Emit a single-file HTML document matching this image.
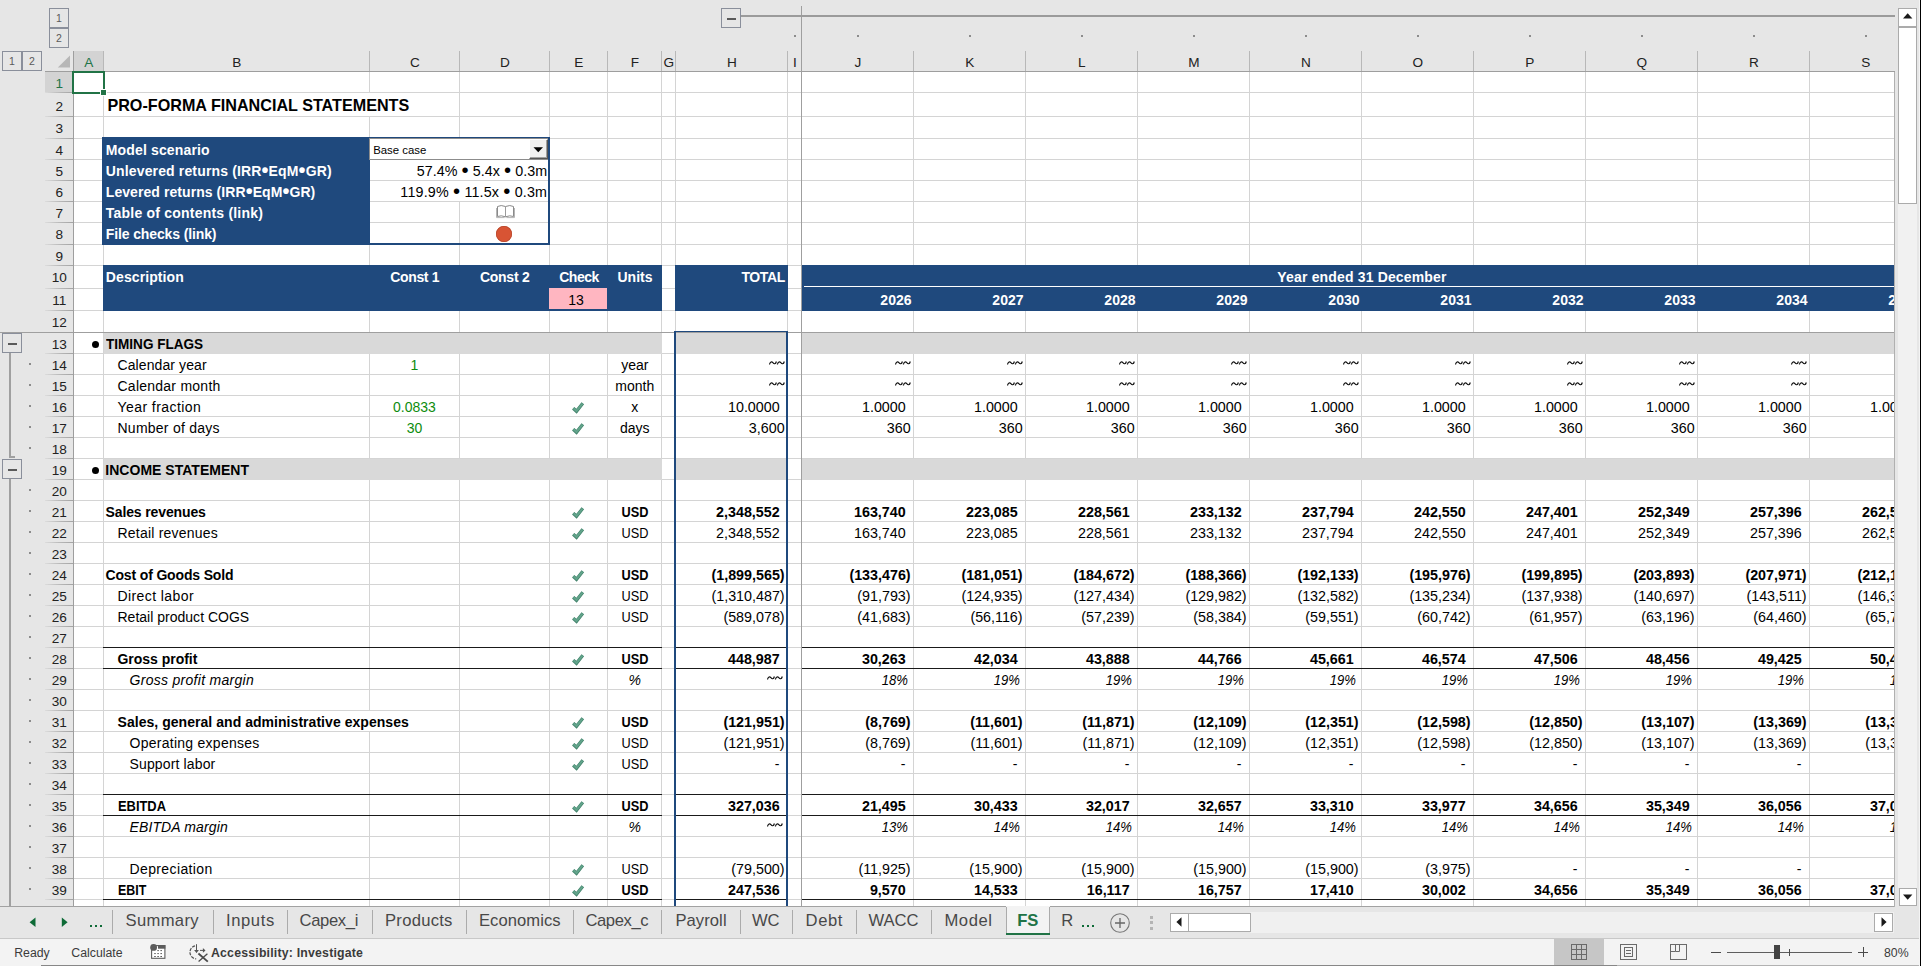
<!DOCTYPE html>
<html><head><meta charset="utf-8"><title>FS</title><style>
html,body{margin:0;padding:0;}
body{width:1921px;height:966px;position:relative;overflow:hidden;background:#e6e6e6;font-family:"Liberation Sans",sans-serif;font-size:14px;color:#000;}
body div,body svg{position:absolute;}
.t{white-space:nowrap;line-height:20px;height:20px;overflow:visible;}
.b{font-weight:bold;}
.i{font-style:italic;}
.w{color:#fff;}
.g{color:#0e8c0e;}
.k{color:#000;}
.hd{color:#222;}
.sel{color:#217346;}
.tab{color:#484848;}
.st{color:#3b3b3b;}
.bu{font-size:1.42em;line-height:0;position:relative;top:0.95px;}
.lb{width:20px;height:20px;box-sizing:border-box;border:1px solid #8a8f9b;background:#e6e6e6;font-size:10.5px;line-height:19px;text-align:center;color:#5a5a5a;}
</style></head><body>
<div id="grid" style="left:0;top:0;width:1894px;height:906px;overflow:hidden;">
<div style="left:74px;top:72px;width:1820px;height:834px;background:#fff;"></div>
<div style="left:103px;top:72px;width:1px;height:834px;background:#d4d4d4;"></div>
<div style="left:369px;top:72px;width:1px;height:834px;background:#d4d4d4;"></div>
<div style="left:459px;top:72px;width:1px;height:834px;background:#d4d4d4;"></div>
<div style="left:549px;top:72px;width:1px;height:834px;background:#d4d4d4;"></div>
<div style="left:607px;top:72px;width:1px;height:834px;background:#d4d4d4;"></div>
<div style="left:661px;top:72px;width:1px;height:834px;background:#d4d4d4;"></div>
<div style="left:675px;top:72px;width:1px;height:834px;background:#d4d4d4;"></div>
<div style="left:787px;top:72px;width:1px;height:834px;background:#d4d4d4;"></div>
<div style="left:801px;top:72px;width:1px;height:834px;background:#d4d4d4;"></div>
<div style="left:913px;top:72px;width:1px;height:834px;background:#d4d4d4;"></div>
<div style="left:1025px;top:72px;width:1px;height:834px;background:#d4d4d4;"></div>
<div style="left:1137px;top:72px;width:1px;height:834px;background:#d4d4d4;"></div>
<div style="left:1249px;top:72px;width:1px;height:834px;background:#d4d4d4;"></div>
<div style="left:1361px;top:72px;width:1px;height:834px;background:#d4d4d4;"></div>
<div style="left:1473px;top:72px;width:1px;height:834px;background:#d4d4d4;"></div>
<div style="left:1585px;top:72px;width:1px;height:834px;background:#d4d4d4;"></div>
<div style="left:1697px;top:72px;width:1px;height:834px;background:#d4d4d4;"></div>
<div style="left:1809px;top:72px;width:1px;height:834px;background:#d4d4d4;"></div>
<div style="left:74px;top:92px;width:1820px;height:1px;background:#d4d4d4;"></div>
<div style="left:74px;top:116px;width:1820px;height:1px;background:#d4d4d4;"></div>
<div style="left:74px;top:138px;width:1820px;height:1px;background:#d4d4d4;"></div>
<div style="left:74px;top:159px;width:1820px;height:1px;background:#d4d4d4;"></div>
<div style="left:74px;top:180px;width:1820px;height:1px;background:#d4d4d4;"></div>
<div style="left:74px;top:201px;width:1820px;height:1px;background:#d4d4d4;"></div>
<div style="left:74px;top:222px;width:1820px;height:1px;background:#d4d4d4;"></div>
<div style="left:74px;top:244px;width:1820px;height:1px;background:#d4d4d4;"></div>
<div style="left:74px;top:265px;width:1820px;height:1px;background:#d4d4d4;"></div>
<div style="left:74px;top:288px;width:1820px;height:1px;background:#d4d4d4;"></div>
<div style="left:74px;top:310px;width:1820px;height:1px;background:#d4d4d4;"></div>
<div style="left:74px;top:332px;width:1820px;height:1px;background:#d4d4d4;"></div>
<div style="left:74px;top:353px;width:1820px;height:1px;background:#d4d4d4;"></div>
<div style="left:74px;top:374px;width:1820px;height:1px;background:#d4d4d4;"></div>
<div style="left:74px;top:395px;width:1820px;height:1px;background:#d4d4d4;"></div>
<div style="left:74px;top:416px;width:1820px;height:1px;background:#d4d4d4;"></div>
<div style="left:74px;top:437px;width:1820px;height:1px;background:#d4d4d4;"></div>
<div style="left:74px;top:458px;width:1820px;height:1px;background:#d4d4d4;"></div>
<div style="left:74px;top:479px;width:1820px;height:1px;background:#d4d4d4;"></div>
<div style="left:74px;top:500px;width:1820px;height:1px;background:#d4d4d4;"></div>
<div style="left:74px;top:521px;width:1820px;height:1px;background:#d4d4d4;"></div>
<div style="left:74px;top:542px;width:1820px;height:1px;background:#d4d4d4;"></div>
<div style="left:74px;top:563px;width:1820px;height:1px;background:#d4d4d4;"></div>
<div style="left:74px;top:584px;width:1820px;height:1px;background:#d4d4d4;"></div>
<div style="left:74px;top:605px;width:1820px;height:1px;background:#d4d4d4;"></div>
<div style="left:74px;top:626px;width:1820px;height:1px;background:#d4d4d4;"></div>
<div style="left:74px;top:647px;width:1820px;height:1px;background:#d4d4d4;"></div>
<div style="left:74px;top:668px;width:1820px;height:1px;background:#d4d4d4;"></div>
<div style="left:74px;top:689px;width:1820px;height:1px;background:#d4d4d4;"></div>
<div style="left:74px;top:710px;width:1820px;height:1px;background:#d4d4d4;"></div>
<div style="left:74px;top:731px;width:1820px;height:1px;background:#d4d4d4;"></div>
<div style="left:74px;top:752px;width:1820px;height:1px;background:#d4d4d4;"></div>
<div style="left:74px;top:773px;width:1820px;height:1px;background:#d4d4d4;"></div>
<div style="left:74px;top:794px;width:1820px;height:1px;background:#d4d4d4;"></div>
<div style="left:74px;top:815px;width:1820px;height:1px;background:#d4d4d4;"></div>
<div style="left:74px;top:836px;width:1820px;height:1px;background:#d4d4d4;"></div>
<div style="left:74px;top:857px;width:1820px;height:1px;background:#d4d4d4;"></div>
<div style="left:74px;top:878px;width:1820px;height:1px;background:#d4d4d4;"></div>
<div style="left:74px;top:899px;width:1820px;height:1px;background:#d4d4d4;"></div>
<div style="left:369px;top:93px;width:1px;height:23px;background:#fff;"></div>
<div style="left:369px;top:711px;width:1px;height:20px;background:#fff;"></div>
<div style="left:459px;top:160px;width:1px;height:20px;background:#fff;"></div>
<div style="left:459px;top:181px;width:1px;height:20px;background:#fff;"></div>
<div style="left:102px;top:137px;width:268px;height:108px;background:#1f497d;"></div>
<div style="left:370px;top:137px;width:180px;height:2px;background:#1f497d;"></div>
<div style="left:370px;top:243px;width:180px;height:2px;background:#1f497d;"></div>
<div style="left:548px;top:137px;width:2px;height:108px;background:#1f497d;"></div>
<div style="left:370px;top:139px;width:178px;height:20px;background:#fff;"></div>
<div style="left:370px;top:159px;width:178px;height:1px;background:#8c8c8c;"></div>
<div style="left:369px;top:138px;width:179px;height:1px;background:#8c8c8c;"></div>
<div style="left:369px;top:138px;width:1px;height:22px;background:#8c8c8c;"></div>
<div style="left:529px;top:139px;width:19px;height:20px;background:#f0f0f0;box-sizing:border-box;border:1px solid;border-color:#fff #555 #555 #fff;box-shadow:inset -1px -1px 0 #a0a0a0;"></div>
<svg style="left:533px;top:147px" width="11" height="6" viewBox="0 0 11 6"><path d="M0.5 0.3 L10 0.3 L5.25 5.3 Z" fill="#000"/></svg>
<div class="t k" style="left:373.20px;top:140px;width:400px;text-align:left;font-size:11.4px;">Base case</div>
<div style="left:103px;top:265px;width:559px;height:46px;background:#1f497d;"></div>
<div style="left:675px;top:265px;width:113px;height:46px;background:#1f497d;"></div>
<div style="left:802px;top:265px;width:1092px;height:46px;background:#1f497d;"></div>
<div style="left:804px;top:286px;width:1090px;height:1px;background:#fff;"></div>
<div style="left:549px;top:288px;width:58px;height:21px;background:#ffb6c1;"></div>
<div style="left:104px;top:333px;width:558px;height:21px;background:#d9d9d9;"></div>
<div style="left:676px;top:333px;width:110px;height:21px;background:#d9d9d9;"></div>
<div style="left:802px;top:333px;width:1092px;height:21px;background:#d9d9d9;"></div>
<div style="left:104px;top:459px;width:558px;height:21px;background:#d9d9d9;"></div>
<div style="left:676px;top:459px;width:110px;height:21px;background:#d9d9d9;"></div>
<div style="left:802px;top:459px;width:1092px;height:21px;background:#d9d9d9;"></div>
<div style="left:103px;top:647px;width:559px;height:1px;background:#1a1a1a;"></div>
<div style="left:676px;top:647px;width:110px;height:1px;background:#1a1a1a;"></div>
<div style="left:802px;top:647px;width:1092px;height:1px;background:#1a1a1a;"></div>
<div style="left:103px;top:668px;width:559px;height:1px;background:#1a1a1a;"></div>
<div style="left:676px;top:668px;width:110px;height:1px;background:#1a1a1a;"></div>
<div style="left:802px;top:668px;width:1092px;height:1px;background:#1a1a1a;"></div>
<div style="left:103px;top:794px;width:559px;height:1px;background:#1a1a1a;"></div>
<div style="left:676px;top:794px;width:110px;height:1px;background:#1a1a1a;"></div>
<div style="left:802px;top:794px;width:1092px;height:1px;background:#1a1a1a;"></div>
<div style="left:103px;top:815px;width:559px;height:1px;background:#1a1a1a;"></div>
<div style="left:676px;top:815px;width:110px;height:1px;background:#1a1a1a;"></div>
<div style="left:802px;top:815px;width:1092px;height:1px;background:#1a1a1a;"></div>
<div style="left:103px;top:899px;width:559px;height:1px;background:#1a1a1a;"></div>
<div style="left:676px;top:899px;width:110px;height:1px;background:#1a1a1a;"></div>
<div style="left:802px;top:899px;width:1092px;height:1px;background:#1a1a1a;"></div>
<div style="left:0px;top:332px;width:1894px;height:1px;background:#9f9f9f;"></div>
<div style="left:801px;top:6px;width:1px;height:900px;background:#9f9f9f;"></div>
<div style="left:674px;top:331px;width:114px;height:1px;background:#1f497d;"></div>
<div style="left:674px;top:331px;width:2px;height:575px;background:#1f497d;"></div>
<div style="left:786px;top:331px;width:2px;height:575px;background:#1f497d;"></div>
<div class="t b" style="left:107.40px;top:95px;width:500px;text-align:left;font-size:16.17px;">PRO-FORMA FINANCIAL STATEMENTS</div>
<div class="t b w" style="left:105.80px;top:140px;width:300px;text-align:left;letter-spacing:0.146px;">Model scenario</div>
<div class="t b w" style="left:105.80px;top:161px;width:300px;text-align:left;letter-spacing:0.146px;">Unlevered returns (IRR<span class="bu">•</span>EqM<span class="bu">•</span>GR)</div>
<div class="t b w" style="left:105.80px;top:182px;width:300px;text-align:left;letter-spacing:0.067px;">Levered returns (IRR<span class="bu">•</span>EqM<span class="bu">•</span>GR)</div>
<div class="t b w" style="left:105.80px;top:203px;width:300px;text-align:left;letter-spacing:0.213px;">Table of contents (link)</div>
<div class="t b w" style="left:105.80px;top:224px;width:300px;text-align:left;letter-spacing:-0.124px;">File checks (link)</div>
<div class="t ret" style="left:347.20px;top:161px;width:200px;text-align:right;font-size:14.3px;letter-spacing:0.053px;">57.4% <span class="bu">•</span> 5.4x <span class="bu">•</span> 0.3m</div>
<div class="t ret" style="left:347.20px;top:182px;width:200px;text-align:right;font-size:14.3px;letter-spacing:0.17px;">119.9% <span class="bu">•</span> 11.5x <span class="bu">•</span> 0.3m</div>
<svg style="left:496px;top:204px" width="19" height="15" viewBox="0 0 19 15"><path d="M1.5 2.5 Q5 0.6 9.5 2.5 Q14 0.6 17.5 2.5 L17.5 12.5 Q14 11 9.5 12.8 Q5 11 1.5 12.5 Z" fill="#fff" stroke="#8a8a8a" stroke-width="1"/><path d="M9.5 2.5 L9.5 12.8" stroke="#9a9a9a" stroke-width="1"/><path d="M0.5 4 L0.5 13.6 L8.6 13.6 M18.5 4 L18.5 13.6 L10.4 13.6" fill="none" stroke="#b5b5b5" stroke-width="1"/></svg>
<div style="left:496px;top:225.7px;width:16px;height:16px;border-radius:50%;background:#d85434;box-shadow:inset 0 0 0 0.7px #b7472c;"></div>
<div class="t b w" style="left:105.80px;top:267px;width:400px;text-align:left;letter-spacing:0.100px;">Description</div>
<div class="t b w" style="left:369.70px;top:267px;width:90px;text-align:center;letter-spacing:-0.330px;">Const 1</div>
<div class="t b w" style="left:459.70px;top:267px;width:90px;text-align:center;letter-spacing:-0.250px;">Const 2</div>
<div class="t b w" style="left:550.00px;top:267px;width:58px;text-align:center;letter-spacing:-0.500px;">Check</div>
<div class="t b w" style="left:608.00px;top:267px;width:54px;text-align:center;">Units</div>
<div class="t b w" style="left:684.80px;top:267px;width:100px;text-align:right;letter-spacing:-0.400px;">TOTAL</div>
<div class="t b w" style="left:1212.00px;top:267px;width:300px;text-align:center;letter-spacing:0.160px;">Year ended 31 December</div>
<div class="t " style="left:547.10px;top:290px;width:58px;text-align:center;">13</div>
<div class="t b w" style="left:811.50px;top:290px;width:100px;text-align:right;">2026</div>
<div class="t b w" style="left:923.50px;top:290px;width:100px;text-align:right;">2027</div>
<div class="t b w" style="left:1035.50px;top:290px;width:100px;text-align:right;">2028</div>
<div class="t b w" style="left:1147.50px;top:290px;width:100px;text-align:right;">2029</div>
<div class="t b w" style="left:1259.50px;top:290px;width:100px;text-align:right;">2030</div>
<div class="t b w" style="left:1371.50px;top:290px;width:100px;text-align:right;">2031</div>
<div class="t b w" style="left:1483.50px;top:290px;width:100px;text-align:right;">2032</div>
<div class="t b w" style="left:1595.50px;top:290px;width:100px;text-align:right;">2033</div>
<div class="t b w" style="left:1707.50px;top:290px;width:100px;text-align:right;">2034</div>
<div class="t b w" style="left:1819.50px;top:290px;width:100px;text-align:right;">2035</div>
<div style="left:92.3px;top:341px;width:7px;height:7px;border-radius:50%;background:#000"></div>
<div class="t b cap" style="left:105.80px;top:334px;width:400px;text-align:left;transform:scaleX(0.968);transform-origin:0 50%;">TIMING FLAGS</div>
<div style="left:92.3px;top:467px;width:7px;height:7px;border-radius:50%;background:#000"></div>
<div class="t b cap" style="left:105.30px;top:460px;width:400px;text-align:left;letter-spacing:0.020px;transform:scaleX(1.0);transform-origin:0 50%;">INCOME STATEMENT</div>
<div class="t " style="left:117.50px;top:355px;width:420px;text-align:left;letter-spacing:0.100px;">Calendar year</div>
<div class="t g" style="left:370.50px;top:355px;width:88px;text-align:center;">1</div>
<div class="t " style="left:607.80px;top:355px;width:54px;text-align:center;">year</div>
<svg style="left:769.2px;top:359.8px" width="16" height="6" viewBox="0 0 16 6"><path d="M0.5 4.5 C1.1 1.5 2.8 1.3 3.9 2.7 S6.6 4.5 7.4 1.5 M8.4 4.5 C9.0 1.5 10.7 1.3 11.8 2.7 S14.5 4.5 15.3 1.5" fill="none" stroke="#111" stroke-width="1.2"/></svg>
<svg style="left:895.2px;top:359.8px" width="16" height="6" viewBox="0 0 16 6"><path d="M0.5 4.5 C1.1 1.5 2.8 1.3 3.9 2.7 S6.6 4.5 7.4 1.5 M8.4 4.5 C9.0 1.5 10.7 1.3 11.8 2.7 S14.5 4.5 15.3 1.5" fill="none" stroke="#111" stroke-width="1.2"/></svg>
<svg style="left:1007.2px;top:359.8px" width="16" height="6" viewBox="0 0 16 6"><path d="M0.5 4.5 C1.1 1.5 2.8 1.3 3.9 2.7 S6.6 4.5 7.4 1.5 M8.4 4.5 C9.0 1.5 10.7 1.3 11.8 2.7 S14.5 4.5 15.3 1.5" fill="none" stroke="#111" stroke-width="1.2"/></svg>
<svg style="left:1119.2px;top:359.8px" width="16" height="6" viewBox="0 0 16 6"><path d="M0.5 4.5 C1.1 1.5 2.8 1.3 3.9 2.7 S6.6 4.5 7.4 1.5 M8.4 4.5 C9.0 1.5 10.7 1.3 11.8 2.7 S14.5 4.5 15.3 1.5" fill="none" stroke="#111" stroke-width="1.2"/></svg>
<svg style="left:1231.2px;top:359.8px" width="16" height="6" viewBox="0 0 16 6"><path d="M0.5 4.5 C1.1 1.5 2.8 1.3 3.9 2.7 S6.6 4.5 7.4 1.5 M8.4 4.5 C9.0 1.5 10.7 1.3 11.8 2.7 S14.5 4.5 15.3 1.5" fill="none" stroke="#111" stroke-width="1.2"/></svg>
<svg style="left:1343.2px;top:359.8px" width="16" height="6" viewBox="0 0 16 6"><path d="M0.5 4.5 C1.1 1.5 2.8 1.3 3.9 2.7 S6.6 4.5 7.4 1.5 M8.4 4.5 C9.0 1.5 10.7 1.3 11.8 2.7 S14.5 4.5 15.3 1.5" fill="none" stroke="#111" stroke-width="1.2"/></svg>
<svg style="left:1455.2px;top:359.8px" width="16" height="6" viewBox="0 0 16 6"><path d="M0.5 4.5 C1.1 1.5 2.8 1.3 3.9 2.7 S6.6 4.5 7.4 1.5 M8.4 4.5 C9.0 1.5 10.7 1.3 11.8 2.7 S14.5 4.5 15.3 1.5" fill="none" stroke="#111" stroke-width="1.2"/></svg>
<svg style="left:1567.2px;top:359.8px" width="16" height="6" viewBox="0 0 16 6"><path d="M0.5 4.5 C1.1 1.5 2.8 1.3 3.9 2.7 S6.6 4.5 7.4 1.5 M8.4 4.5 C9.0 1.5 10.7 1.3 11.8 2.7 S14.5 4.5 15.3 1.5" fill="none" stroke="#111" stroke-width="1.2"/></svg>
<svg style="left:1679.2px;top:359.8px" width="16" height="6" viewBox="0 0 16 6"><path d="M0.5 4.5 C1.1 1.5 2.8 1.3 3.9 2.7 S6.6 4.5 7.4 1.5 M8.4 4.5 C9.0 1.5 10.7 1.3 11.8 2.7 S14.5 4.5 15.3 1.5" fill="none" stroke="#111" stroke-width="1.2"/></svg>
<svg style="left:1791.2px;top:359.8px" width="16" height="6" viewBox="0 0 16 6"><path d="M0.5 4.5 C1.1 1.5 2.8 1.3 3.9 2.7 S6.6 4.5 7.4 1.5 M8.4 4.5 C9.0 1.5 10.7 1.3 11.8 2.7 S14.5 4.5 15.3 1.5" fill="none" stroke="#111" stroke-width="1.2"/></svg>
<div class="t " style="left:117.50px;top:376px;width:420px;text-align:left;letter-spacing:0.246px;">Calendar month</div>
<div class="t " style="left:607.80px;top:376px;width:54px;text-align:center;">month</div>
<svg style="left:769.2px;top:380.8px" width="16" height="6" viewBox="0 0 16 6"><path d="M0.5 4.5 C1.1 1.5 2.8 1.3 3.9 2.7 S6.6 4.5 7.4 1.5 M8.4 4.5 C9.0 1.5 10.7 1.3 11.8 2.7 S14.5 4.5 15.3 1.5" fill="none" stroke="#111" stroke-width="1.2"/></svg>
<svg style="left:895.2px;top:380.8px" width="16" height="6" viewBox="0 0 16 6"><path d="M0.5 4.5 C1.1 1.5 2.8 1.3 3.9 2.7 S6.6 4.5 7.4 1.5 M8.4 4.5 C9.0 1.5 10.7 1.3 11.8 2.7 S14.5 4.5 15.3 1.5" fill="none" stroke="#111" stroke-width="1.2"/></svg>
<svg style="left:1007.2px;top:380.8px" width="16" height="6" viewBox="0 0 16 6"><path d="M0.5 4.5 C1.1 1.5 2.8 1.3 3.9 2.7 S6.6 4.5 7.4 1.5 M8.4 4.5 C9.0 1.5 10.7 1.3 11.8 2.7 S14.5 4.5 15.3 1.5" fill="none" stroke="#111" stroke-width="1.2"/></svg>
<svg style="left:1119.2px;top:380.8px" width="16" height="6" viewBox="0 0 16 6"><path d="M0.5 4.5 C1.1 1.5 2.8 1.3 3.9 2.7 S6.6 4.5 7.4 1.5 M8.4 4.5 C9.0 1.5 10.7 1.3 11.8 2.7 S14.5 4.5 15.3 1.5" fill="none" stroke="#111" stroke-width="1.2"/></svg>
<svg style="left:1231.2px;top:380.8px" width="16" height="6" viewBox="0 0 16 6"><path d="M0.5 4.5 C1.1 1.5 2.8 1.3 3.9 2.7 S6.6 4.5 7.4 1.5 M8.4 4.5 C9.0 1.5 10.7 1.3 11.8 2.7 S14.5 4.5 15.3 1.5" fill="none" stroke="#111" stroke-width="1.2"/></svg>
<svg style="left:1343.2px;top:380.8px" width="16" height="6" viewBox="0 0 16 6"><path d="M0.5 4.5 C1.1 1.5 2.8 1.3 3.9 2.7 S6.6 4.5 7.4 1.5 M8.4 4.5 C9.0 1.5 10.7 1.3 11.8 2.7 S14.5 4.5 15.3 1.5" fill="none" stroke="#111" stroke-width="1.2"/></svg>
<svg style="left:1455.2px;top:380.8px" width="16" height="6" viewBox="0 0 16 6"><path d="M0.5 4.5 C1.1 1.5 2.8 1.3 3.9 2.7 S6.6 4.5 7.4 1.5 M8.4 4.5 C9.0 1.5 10.7 1.3 11.8 2.7 S14.5 4.5 15.3 1.5" fill="none" stroke="#111" stroke-width="1.2"/></svg>
<svg style="left:1567.2px;top:380.8px" width="16" height="6" viewBox="0 0 16 6"><path d="M0.5 4.5 C1.1 1.5 2.8 1.3 3.9 2.7 S6.6 4.5 7.4 1.5 M8.4 4.5 C9.0 1.5 10.7 1.3 11.8 2.7 S14.5 4.5 15.3 1.5" fill="none" stroke="#111" stroke-width="1.2"/></svg>
<svg style="left:1679.2px;top:380.8px" width="16" height="6" viewBox="0 0 16 6"><path d="M0.5 4.5 C1.1 1.5 2.8 1.3 3.9 2.7 S6.6 4.5 7.4 1.5 M8.4 4.5 C9.0 1.5 10.7 1.3 11.8 2.7 S14.5 4.5 15.3 1.5" fill="none" stroke="#111" stroke-width="1.2"/></svg>
<svg style="left:1791.2px;top:380.8px" width="16" height="6" viewBox="0 0 16 6"><path d="M0.5 4.5 C1.1 1.5 2.8 1.3 3.9 2.7 S6.6 4.5 7.4 1.5 M8.4 4.5 C9.0 1.5 10.7 1.3 11.8 2.7 S14.5 4.5 15.3 1.5" fill="none" stroke="#111" stroke-width="1.2"/></svg>
<div class="t " style="left:117.50px;top:397px;width:420px;text-align:left;letter-spacing:0.433px;">Year fraction</div>
<div class="t g" style="left:370.50px;top:397px;width:88px;text-align:center;">0.0833</div>
<svg style="left:571px;top:401px" width="14" height="13" viewBox="0 0 14 13"><path d="M2.2 7.2 L5.5 10.3 L11.8 2.3" fill="none" stroke="#3f7f68" stroke-width="3.3" stroke-linecap="butt" stroke-linejoin="miter"/><path d="M2.4 7.3 L5.5 10.0 L11.6 2.5" fill="none" stroke="#62a48b" stroke-width="2.0" stroke-linecap="butt" stroke-linejoin="miter"/></svg>
<div class="t " style="left:607.80px;top:397px;width:54px;text-align:center;">x</div>
<div class="t " style="left:669.70px;top:397px;width:110px;text-align:right;font-size:14.3px;">10.0000</div>
<div class="t " style="left:795.70px;top:397px;width:110px;text-align:right;font-size:14.3px;">1.0000</div>
<div class="t " style="left:907.70px;top:397px;width:110px;text-align:right;font-size:14.3px;">1.0000</div>
<div class="t " style="left:1019.70px;top:397px;width:110px;text-align:right;font-size:14.3px;">1.0000</div>
<div class="t " style="left:1131.70px;top:397px;width:110px;text-align:right;font-size:14.3px;">1.0000</div>
<div class="t " style="left:1243.70px;top:397px;width:110px;text-align:right;font-size:14.3px;">1.0000</div>
<div class="t " style="left:1355.70px;top:397px;width:110px;text-align:right;font-size:14.3px;">1.0000</div>
<div class="t " style="left:1467.70px;top:397px;width:110px;text-align:right;font-size:14.3px;">1.0000</div>
<div class="t " style="left:1579.70px;top:397px;width:110px;text-align:right;font-size:14.3px;">1.0000</div>
<div class="t " style="left:1691.70px;top:397px;width:110px;text-align:right;font-size:14.3px;">1.0000</div>
<div class="t " style="left:1803.70px;top:397px;width:110px;text-align:right;font-size:14.3px;">1.0000</div>
<div class="t " style="left:117.50px;top:418px;width:420px;text-align:left;letter-spacing:0.246px;">Number of days</div>
<div class="t g" style="left:370.50px;top:418px;width:88px;text-align:center;">30</div>
<svg style="left:571px;top:422px" width="14" height="13" viewBox="0 0 14 13"><path d="M2.2 7.2 L5.5 10.3 L11.8 2.3" fill="none" stroke="#3f7f68" stroke-width="3.3" stroke-linecap="butt" stroke-linejoin="miter"/><path d="M2.4 7.3 L5.5 10.0 L11.6 2.5" fill="none" stroke="#62a48b" stroke-width="2.0" stroke-linecap="butt" stroke-linejoin="miter"/></svg>
<div class="t " style="left:607.80px;top:418px;width:54px;text-align:center;">days</div>
<div class="t " style="left:674.60px;top:418px;width:110px;text-align:right;font-size:14.3px;">3,600</div>
<div class="t " style="left:800.60px;top:418px;width:110px;text-align:right;font-size:14.3px;">360</div>
<div class="t " style="left:912.60px;top:418px;width:110px;text-align:right;font-size:14.3px;">360</div>
<div class="t " style="left:1024.60px;top:418px;width:110px;text-align:right;font-size:14.3px;">360</div>
<div class="t " style="left:1136.60px;top:418px;width:110px;text-align:right;font-size:14.3px;">360</div>
<div class="t " style="left:1248.60px;top:418px;width:110px;text-align:right;font-size:14.3px;">360</div>
<div class="t " style="left:1360.60px;top:418px;width:110px;text-align:right;font-size:14.3px;">360</div>
<div class="t " style="left:1472.60px;top:418px;width:110px;text-align:right;font-size:14.3px;">360</div>
<div class="t " style="left:1584.60px;top:418px;width:110px;text-align:right;font-size:14.3px;">360</div>
<div class="t " style="left:1696.60px;top:418px;width:110px;text-align:right;font-size:14.3px;">360</div>
<div class="t b" style="left:105.50px;top:502px;width:420px;text-align:left;letter-spacing:-0.123px;">Sales revenues</div>
<svg style="left:571px;top:506px" width="14" height="13" viewBox="0 0 14 13"><path d="M2.2 7.2 L5.5 10.3 L11.8 2.3" fill="none" stroke="#3f7f68" stroke-width="3.3" stroke-linecap="butt" stroke-linejoin="miter"/><path d="M2.4 7.3 L5.5 10.0 L11.6 2.5" fill="none" stroke="#62a48b" stroke-width="2.0" stroke-linecap="butt" stroke-linejoin="miter"/></svg>
<div class="t b" style="left:607.80px;top:502px;width:54px;text-align:center;transform:scaleX(0.91);transform-origin:50% 50%;">USD</div>
<div class="t b" style="left:669.70px;top:502px;width:110px;text-align:right;font-size:14.3px;">2,348,552</div>
<div class="t b" style="left:795.70px;top:502px;width:110px;text-align:right;font-size:14.3px;">163,740</div>
<div class="t b" style="left:907.70px;top:502px;width:110px;text-align:right;font-size:14.3px;">223,085</div>
<div class="t b" style="left:1019.70px;top:502px;width:110px;text-align:right;font-size:14.3px;">228,561</div>
<div class="t b" style="left:1131.70px;top:502px;width:110px;text-align:right;font-size:14.3px;">233,132</div>
<div class="t b" style="left:1243.70px;top:502px;width:110px;text-align:right;font-size:14.3px;">237,794</div>
<div class="t b" style="left:1355.70px;top:502px;width:110px;text-align:right;font-size:14.3px;">242,550</div>
<div class="t b" style="left:1467.70px;top:502px;width:110px;text-align:right;font-size:14.3px;">247,401</div>
<div class="t b" style="left:1579.70px;top:502px;width:110px;text-align:right;font-size:14.3px;">252,349</div>
<div class="t b" style="left:1691.70px;top:502px;width:110px;text-align:right;font-size:14.3px;">257,396</div>
<div class="t b" style="left:1803.70px;top:502px;width:110px;text-align:right;font-size:14.3px;">262,544</div>
<div class="t " style="left:117.50px;top:523px;width:420px;text-align:left;letter-spacing:0.207px;">Retail revenues</div>
<svg style="left:571px;top:527px" width="14" height="13" viewBox="0 0 14 13"><path d="M2.2 7.2 L5.5 10.3 L11.8 2.3" fill="none" stroke="#3f7f68" stroke-width="3.3" stroke-linecap="butt" stroke-linejoin="miter"/><path d="M2.4 7.3 L5.5 10.0 L11.6 2.5" fill="none" stroke="#62a48b" stroke-width="2.0" stroke-linecap="butt" stroke-linejoin="miter"/></svg>
<div class="t " style="left:607.80px;top:523px;width:54px;text-align:center;transform:scaleX(0.91);transform-origin:50% 50%;">USD</div>
<div class="t " style="left:669.70px;top:523px;width:110px;text-align:right;font-size:14.3px;">2,348,552</div>
<div class="t " style="left:795.70px;top:523px;width:110px;text-align:right;font-size:14.3px;">163,740</div>
<div class="t " style="left:907.70px;top:523px;width:110px;text-align:right;font-size:14.3px;">223,085</div>
<div class="t " style="left:1019.70px;top:523px;width:110px;text-align:right;font-size:14.3px;">228,561</div>
<div class="t " style="left:1131.70px;top:523px;width:110px;text-align:right;font-size:14.3px;">233,132</div>
<div class="t " style="left:1243.70px;top:523px;width:110px;text-align:right;font-size:14.3px;">237,794</div>
<div class="t " style="left:1355.70px;top:523px;width:110px;text-align:right;font-size:14.3px;">242,550</div>
<div class="t " style="left:1467.70px;top:523px;width:110px;text-align:right;font-size:14.3px;">247,401</div>
<div class="t " style="left:1579.70px;top:523px;width:110px;text-align:right;font-size:14.3px;">252,349</div>
<div class="t " style="left:1691.70px;top:523px;width:110px;text-align:right;font-size:14.3px;">257,396</div>
<div class="t " style="left:1803.70px;top:523px;width:110px;text-align:right;font-size:14.3px;">262,544</div>
<div class="t b" style="left:105.50px;top:565px;width:420px;text-align:left;letter-spacing:-0.153px;">Cost of Goods Sold</div>
<svg style="left:571px;top:569px" width="14" height="13" viewBox="0 0 14 13"><path d="M2.2 7.2 L5.5 10.3 L11.8 2.3" fill="none" stroke="#3f7f68" stroke-width="3.3" stroke-linecap="butt" stroke-linejoin="miter"/><path d="M2.4 7.3 L5.5 10.0 L11.6 2.5" fill="none" stroke="#62a48b" stroke-width="2.0" stroke-linecap="butt" stroke-linejoin="miter"/></svg>
<div class="t b" style="left:607.80px;top:565px;width:54px;text-align:center;transform:scaleX(0.91);transform-origin:50% 50%;">USD</div>
<div class="t b" style="left:674.60px;top:565px;width:110px;text-align:right;font-size:14.3px;">(1,899,565)</div>
<div class="t b" style="left:800.60px;top:565px;width:110px;text-align:right;font-size:14.3px;">(133,476)</div>
<div class="t b" style="left:912.60px;top:565px;width:110px;text-align:right;font-size:14.3px;">(181,051)</div>
<div class="t b" style="left:1024.60px;top:565px;width:110px;text-align:right;font-size:14.3px;">(184,672)</div>
<div class="t b" style="left:1136.60px;top:565px;width:110px;text-align:right;font-size:14.3px;">(188,366)</div>
<div class="t b" style="left:1248.60px;top:565px;width:110px;text-align:right;font-size:14.3px;">(192,133)</div>
<div class="t b" style="left:1360.60px;top:565px;width:110px;text-align:right;font-size:14.3px;">(195,976)</div>
<div class="t b" style="left:1472.60px;top:565px;width:110px;text-align:right;font-size:14.3px;">(199,895)</div>
<div class="t b" style="left:1584.60px;top:565px;width:110px;text-align:right;font-size:14.3px;">(203,893)</div>
<div class="t b" style="left:1696.60px;top:565px;width:110px;text-align:right;font-size:14.3px;">(207,971)</div>
<div class="t b" style="left:1808.60px;top:565px;width:110px;text-align:right;font-size:14.3px;">(212,130)</div>
<div class="t " style="left:117.50px;top:586px;width:420px;text-align:left;letter-spacing:0.410px;">Direct labor</div>
<svg style="left:571px;top:590px" width="14" height="13" viewBox="0 0 14 13"><path d="M2.2 7.2 L5.5 10.3 L11.8 2.3" fill="none" stroke="#3f7f68" stroke-width="3.3" stroke-linecap="butt" stroke-linejoin="miter"/><path d="M2.4 7.3 L5.5 10.0 L11.6 2.5" fill="none" stroke="#62a48b" stroke-width="2.0" stroke-linecap="butt" stroke-linejoin="miter"/></svg>
<div class="t " style="left:607.80px;top:586px;width:54px;text-align:center;transform:scaleX(0.91);transform-origin:50% 50%;">USD</div>
<div class="t " style="left:674.60px;top:586px;width:110px;text-align:right;font-size:14.3px;">(1,310,487)</div>
<div class="t " style="left:800.60px;top:586px;width:110px;text-align:right;font-size:14.3px;">(91,793)</div>
<div class="t " style="left:912.60px;top:586px;width:110px;text-align:right;font-size:14.3px;">(124,935)</div>
<div class="t " style="left:1024.60px;top:586px;width:110px;text-align:right;font-size:14.3px;">(127,434)</div>
<div class="t " style="left:1136.60px;top:586px;width:110px;text-align:right;font-size:14.3px;">(129,982)</div>
<div class="t " style="left:1248.60px;top:586px;width:110px;text-align:right;font-size:14.3px;">(132,582)</div>
<div class="t " style="left:1360.60px;top:586px;width:110px;text-align:right;font-size:14.3px;">(135,234)</div>
<div class="t " style="left:1472.60px;top:586px;width:110px;text-align:right;font-size:14.3px;">(137,938)</div>
<div class="t " style="left:1584.60px;top:586px;width:110px;text-align:right;font-size:14.3px;">(140,697)</div>
<div class="t " style="left:1696.60px;top:586px;width:110px;text-align:right;font-size:14.3px;">(143,511)</div>
<div class="t " style="left:1808.60px;top:586px;width:110px;text-align:right;font-size:14.3px;">(146,381)</div>
<div class="t " style="left:117.50px;top:607px;width:420px;text-align:left;letter-spacing:0.011px;">Retail product COGS</div>
<svg style="left:571px;top:611px" width="14" height="13" viewBox="0 0 14 13"><path d="M2.2 7.2 L5.5 10.3 L11.8 2.3" fill="none" stroke="#3f7f68" stroke-width="3.3" stroke-linecap="butt" stroke-linejoin="miter"/><path d="M2.4 7.3 L5.5 10.0 L11.6 2.5" fill="none" stroke="#62a48b" stroke-width="2.0" stroke-linecap="butt" stroke-linejoin="miter"/></svg>
<div class="t " style="left:607.80px;top:607px;width:54px;text-align:center;transform:scaleX(0.91);transform-origin:50% 50%;">USD</div>
<div class="t " style="left:674.60px;top:607px;width:110px;text-align:right;font-size:14.3px;">(589,078)</div>
<div class="t " style="left:800.60px;top:607px;width:110px;text-align:right;font-size:14.3px;">(41,683)</div>
<div class="t " style="left:912.60px;top:607px;width:110px;text-align:right;font-size:14.3px;">(56,116)</div>
<div class="t " style="left:1024.60px;top:607px;width:110px;text-align:right;font-size:14.3px;">(57,239)</div>
<div class="t " style="left:1136.60px;top:607px;width:110px;text-align:right;font-size:14.3px;">(58,384)</div>
<div class="t " style="left:1248.60px;top:607px;width:110px;text-align:right;font-size:14.3px;">(59,551)</div>
<div class="t " style="left:1360.60px;top:607px;width:110px;text-align:right;font-size:14.3px;">(60,742)</div>
<div class="t " style="left:1472.60px;top:607px;width:110px;text-align:right;font-size:14.3px;">(61,957)</div>
<div class="t " style="left:1584.60px;top:607px;width:110px;text-align:right;font-size:14.3px;">(63,196)</div>
<div class="t " style="left:1696.60px;top:607px;width:110px;text-align:right;font-size:14.3px;">(64,460)</div>
<div class="t " style="left:1808.60px;top:607px;width:110px;text-align:right;font-size:14.3px;">(65,749)</div>
<div class="t b" style="left:117.50px;top:649px;width:420px;text-align:left;letter-spacing:-0.027px;">Gross profit</div>
<svg style="left:571px;top:653px" width="14" height="13" viewBox="0 0 14 13"><path d="M2.2 7.2 L5.5 10.3 L11.8 2.3" fill="none" stroke="#3f7f68" stroke-width="3.3" stroke-linecap="butt" stroke-linejoin="miter"/><path d="M2.4 7.3 L5.5 10.0 L11.6 2.5" fill="none" stroke="#62a48b" stroke-width="2.0" stroke-linecap="butt" stroke-linejoin="miter"/></svg>
<div class="t b" style="left:607.80px;top:649px;width:54px;text-align:center;transform:scaleX(0.91);transform-origin:50% 50%;">USD</div>
<div class="t b" style="left:669.70px;top:649px;width:110px;text-align:right;font-size:14.3px;">448,987</div>
<div class="t b" style="left:795.70px;top:649px;width:110px;text-align:right;font-size:14.3px;">30,263</div>
<div class="t b" style="left:907.70px;top:649px;width:110px;text-align:right;font-size:14.3px;">42,034</div>
<div class="t b" style="left:1019.70px;top:649px;width:110px;text-align:right;font-size:14.3px;">43,888</div>
<div class="t b" style="left:1131.70px;top:649px;width:110px;text-align:right;font-size:14.3px;">44,766</div>
<div class="t b" style="left:1243.70px;top:649px;width:110px;text-align:right;font-size:14.3px;">45,661</div>
<div class="t b" style="left:1355.70px;top:649px;width:110px;text-align:right;font-size:14.3px;">46,574</div>
<div class="t b" style="left:1467.70px;top:649px;width:110px;text-align:right;font-size:14.3px;">47,506</div>
<div class="t b" style="left:1579.70px;top:649px;width:110px;text-align:right;font-size:14.3px;">48,456</div>
<div class="t b" style="left:1691.70px;top:649px;width:110px;text-align:right;font-size:14.3px;">49,425</div>
<div class="t b" style="left:1803.70px;top:649px;width:110px;text-align:right;font-size:14.3px;">50,414</div>
<div class="t i" style="left:129.50px;top:670px;width:420px;text-align:left;letter-spacing:0.289px;">Gross profit margin</div>
<div class="t i" style="left:607.80px;top:670px;width:54px;text-align:center;">%</div>
<svg style="left:767.2px;top:674.8px" width="16" height="6" viewBox="0 0 16 6"><path d="M0.5 4.5 C1.1 1.5 2.8 1.3 3.9 2.7 S6.6 4.5 7.4 1.5 M8.4 4.5 C9.0 1.5 10.7 1.3 11.8 2.7 S14.5 4.5 15.3 1.5" fill="none" stroke="#111" stroke-width="1.2"/></svg>
<div class="t i" style="left:798.00px;top:670px;width:110px;text-align:right;font-size:14.3px;transform:scaleX(0.915);transform-origin:100% 50%;">18%</div>
<div class="t i" style="left:910.00px;top:670px;width:110px;text-align:right;font-size:14.3px;transform:scaleX(0.915);transform-origin:100% 50%;">19%</div>
<div class="t i" style="left:1022.00px;top:670px;width:110px;text-align:right;font-size:14.3px;transform:scaleX(0.915);transform-origin:100% 50%;">19%</div>
<div class="t i" style="left:1134.00px;top:670px;width:110px;text-align:right;font-size:14.3px;transform:scaleX(0.915);transform-origin:100% 50%;">19%</div>
<div class="t i" style="left:1246.00px;top:670px;width:110px;text-align:right;font-size:14.3px;transform:scaleX(0.915);transform-origin:100% 50%;">19%</div>
<div class="t i" style="left:1358.00px;top:670px;width:110px;text-align:right;font-size:14.3px;transform:scaleX(0.915);transform-origin:100% 50%;">19%</div>
<div class="t i" style="left:1470.00px;top:670px;width:110px;text-align:right;font-size:14.3px;transform:scaleX(0.915);transform-origin:100% 50%;">19%</div>
<div class="t i" style="left:1582.00px;top:670px;width:110px;text-align:right;font-size:14.3px;transform:scaleX(0.915);transform-origin:100% 50%;">19%</div>
<div class="t i" style="left:1694.00px;top:670px;width:110px;text-align:right;font-size:14.3px;transform:scaleX(0.915);transform-origin:100% 50%;">19%</div>
<div class="t i" style="left:1806.00px;top:670px;width:110px;text-align:right;font-size:14.3px;transform:scaleX(0.915);transform-origin:100% 50%;">19%</div>
<div class="t b" style="left:117.50px;top:712px;width:420px;text-align:left;letter-spacing:0.044px;">Sales, general and administrative expenses</div>
<svg style="left:571px;top:716px" width="14" height="13" viewBox="0 0 14 13"><path d="M2.2 7.2 L5.5 10.3 L11.8 2.3" fill="none" stroke="#3f7f68" stroke-width="3.3" stroke-linecap="butt" stroke-linejoin="miter"/><path d="M2.4 7.3 L5.5 10.0 L11.6 2.5" fill="none" stroke="#62a48b" stroke-width="2.0" stroke-linecap="butt" stroke-linejoin="miter"/></svg>
<div class="t b" style="left:607.80px;top:712px;width:54px;text-align:center;transform:scaleX(0.91);transform-origin:50% 50%;">USD</div>
<div class="t b" style="left:674.60px;top:712px;width:110px;text-align:right;font-size:14.3px;">(121,951)</div>
<div class="t b" style="left:800.60px;top:712px;width:110px;text-align:right;font-size:14.3px;">(8,769)</div>
<div class="t b" style="left:912.60px;top:712px;width:110px;text-align:right;font-size:14.3px;">(11,601)</div>
<div class="t b" style="left:1024.60px;top:712px;width:110px;text-align:right;font-size:14.3px;">(11,871)</div>
<div class="t b" style="left:1136.60px;top:712px;width:110px;text-align:right;font-size:14.3px;">(12,109)</div>
<div class="t b" style="left:1248.60px;top:712px;width:110px;text-align:right;font-size:14.3px;">(12,351)</div>
<div class="t b" style="left:1360.60px;top:712px;width:110px;text-align:right;font-size:14.3px;">(12,598)</div>
<div class="t b" style="left:1472.60px;top:712px;width:110px;text-align:right;font-size:14.3px;">(12,850)</div>
<div class="t b" style="left:1584.60px;top:712px;width:110px;text-align:right;font-size:14.3px;">(13,107)</div>
<div class="t b" style="left:1696.60px;top:712px;width:110px;text-align:right;font-size:14.3px;">(13,369)</div>
<div class="t b" style="left:1808.60px;top:712px;width:110px;text-align:right;font-size:14.3px;">(13,390)</div>
<div class="t " style="left:129.50px;top:733px;width:420px;text-align:left;letter-spacing:0.265px;">Operating expenses</div>
<svg style="left:571px;top:737px" width="14" height="13" viewBox="0 0 14 13"><path d="M2.2 7.2 L5.5 10.3 L11.8 2.3" fill="none" stroke="#3f7f68" stroke-width="3.3" stroke-linecap="butt" stroke-linejoin="miter"/><path d="M2.4 7.3 L5.5 10.0 L11.6 2.5" fill="none" stroke="#62a48b" stroke-width="2.0" stroke-linecap="butt" stroke-linejoin="miter"/></svg>
<div class="t " style="left:607.80px;top:733px;width:54px;text-align:center;transform:scaleX(0.91);transform-origin:50% 50%;">USD</div>
<div class="t " style="left:674.60px;top:733px;width:110px;text-align:right;font-size:14.3px;">(121,951)</div>
<div class="t " style="left:800.60px;top:733px;width:110px;text-align:right;font-size:14.3px;">(8,769)</div>
<div class="t " style="left:912.60px;top:733px;width:110px;text-align:right;font-size:14.3px;">(11,601)</div>
<div class="t " style="left:1024.60px;top:733px;width:110px;text-align:right;font-size:14.3px;">(11,871)</div>
<div class="t " style="left:1136.60px;top:733px;width:110px;text-align:right;font-size:14.3px;">(12,109)</div>
<div class="t " style="left:1248.60px;top:733px;width:110px;text-align:right;font-size:14.3px;">(12,351)</div>
<div class="t " style="left:1360.60px;top:733px;width:110px;text-align:right;font-size:14.3px;">(12,598)</div>
<div class="t " style="left:1472.60px;top:733px;width:110px;text-align:right;font-size:14.3px;">(12,850)</div>
<div class="t " style="left:1584.60px;top:733px;width:110px;text-align:right;font-size:14.3px;">(13,107)</div>
<div class="t " style="left:1696.60px;top:733px;width:110px;text-align:right;font-size:14.3px;">(13,369)</div>
<div class="t " style="left:1808.60px;top:733px;width:110px;text-align:right;font-size:14.3px;">(13,390)</div>
<div class="t " style="left:129.50px;top:754px;width:420px;text-align:left;letter-spacing:0.142px;">Support labor</div>
<svg style="left:571px;top:758px" width="14" height="13" viewBox="0 0 14 13"><path d="M2.2 7.2 L5.5 10.3 L11.8 2.3" fill="none" stroke="#3f7f68" stroke-width="3.3" stroke-linecap="butt" stroke-linejoin="miter"/><path d="M2.4 7.3 L5.5 10.0 L11.6 2.5" fill="none" stroke="#62a48b" stroke-width="2.0" stroke-linecap="butt" stroke-linejoin="miter"/></svg>
<div class="t " style="left:607.80px;top:754px;width:54px;text-align:center;transform:scaleX(0.91);transform-origin:50% 50%;">USD</div>
<div class="t " style="left:767.00px;top:754px;width:20px;text-align:center;">-</div>
<div class="t " style="left:893.00px;top:754px;width:20px;text-align:center;">-</div>
<div class="t " style="left:1005.00px;top:754px;width:20px;text-align:center;">-</div>
<div class="t " style="left:1117.00px;top:754px;width:20px;text-align:center;">-</div>
<div class="t " style="left:1229.00px;top:754px;width:20px;text-align:center;">-</div>
<div class="t " style="left:1341.00px;top:754px;width:20px;text-align:center;">-</div>
<div class="t " style="left:1453.00px;top:754px;width:20px;text-align:center;">-</div>
<div class="t " style="left:1565.00px;top:754px;width:20px;text-align:center;">-</div>
<div class="t " style="left:1677.00px;top:754px;width:20px;text-align:center;">-</div>
<div class="t " style="left:1789.00px;top:754px;width:20px;text-align:center;">-</div>
<div class="t b" style="left:118.10px;top:796px;width:420px;text-align:left;transform:scaleX(0.92);transform-origin:0 50%;">EBITDA</div>
<svg style="left:571px;top:800px" width="14" height="13" viewBox="0 0 14 13"><path d="M2.2 7.2 L5.5 10.3 L11.8 2.3" fill="none" stroke="#3f7f68" stroke-width="3.3" stroke-linecap="butt" stroke-linejoin="miter"/><path d="M2.4 7.3 L5.5 10.0 L11.6 2.5" fill="none" stroke="#62a48b" stroke-width="2.0" stroke-linecap="butt" stroke-linejoin="miter"/></svg>
<div class="t b" style="left:607.80px;top:796px;width:54px;text-align:center;transform:scaleX(0.91);transform-origin:50% 50%;">USD</div>
<div class="t b" style="left:669.70px;top:796px;width:110px;text-align:right;font-size:14.3px;">327,036</div>
<div class="t b" style="left:795.70px;top:796px;width:110px;text-align:right;font-size:14.3px;">21,495</div>
<div class="t b" style="left:907.70px;top:796px;width:110px;text-align:right;font-size:14.3px;">30,433</div>
<div class="t b" style="left:1019.70px;top:796px;width:110px;text-align:right;font-size:14.3px;">32,017</div>
<div class="t b" style="left:1131.70px;top:796px;width:110px;text-align:right;font-size:14.3px;">32,657</div>
<div class="t b" style="left:1243.70px;top:796px;width:110px;text-align:right;font-size:14.3px;">33,310</div>
<div class="t b" style="left:1355.70px;top:796px;width:110px;text-align:right;font-size:14.3px;">33,977</div>
<div class="t b" style="left:1467.70px;top:796px;width:110px;text-align:right;font-size:14.3px;">34,656</div>
<div class="t b" style="left:1579.70px;top:796px;width:110px;text-align:right;font-size:14.3px;">35,349</div>
<div class="t b" style="left:1691.70px;top:796px;width:110px;text-align:right;font-size:14.3px;">36,056</div>
<div class="t b" style="left:1803.70px;top:796px;width:110px;text-align:right;font-size:14.3px;">37,024</div>
<div class="t i" style="left:129.50px;top:817px;width:420px;text-align:left;letter-spacing:0.125px;">EBITDA margin</div>
<div class="t i" style="left:607.80px;top:817px;width:54px;text-align:center;">%</div>
<svg style="left:767.2px;top:821.8px" width="16" height="6" viewBox="0 0 16 6"><path d="M0.5 4.5 C1.1 1.5 2.8 1.3 3.9 2.7 S6.6 4.5 7.4 1.5 M8.4 4.5 C9.0 1.5 10.7 1.3 11.8 2.7 S14.5 4.5 15.3 1.5" fill="none" stroke="#111" stroke-width="1.2"/></svg>
<div class="t i" style="left:798.00px;top:817px;width:110px;text-align:right;font-size:14.3px;transform:scaleX(0.915);transform-origin:100% 50%;">13%</div>
<div class="t i" style="left:910.00px;top:817px;width:110px;text-align:right;font-size:14.3px;transform:scaleX(0.915);transform-origin:100% 50%;">14%</div>
<div class="t i" style="left:1022.00px;top:817px;width:110px;text-align:right;font-size:14.3px;transform:scaleX(0.915);transform-origin:100% 50%;">14%</div>
<div class="t i" style="left:1134.00px;top:817px;width:110px;text-align:right;font-size:14.3px;transform:scaleX(0.915);transform-origin:100% 50%;">14%</div>
<div class="t i" style="left:1246.00px;top:817px;width:110px;text-align:right;font-size:14.3px;transform:scaleX(0.915);transform-origin:100% 50%;">14%</div>
<div class="t i" style="left:1358.00px;top:817px;width:110px;text-align:right;font-size:14.3px;transform:scaleX(0.915);transform-origin:100% 50%;">14%</div>
<div class="t i" style="left:1470.00px;top:817px;width:110px;text-align:right;font-size:14.3px;transform:scaleX(0.915);transform-origin:100% 50%;">14%</div>
<div class="t i" style="left:1582.00px;top:817px;width:110px;text-align:right;font-size:14.3px;transform:scaleX(0.915);transform-origin:100% 50%;">14%</div>
<div class="t i" style="left:1694.00px;top:817px;width:110px;text-align:right;font-size:14.3px;transform:scaleX(0.915);transform-origin:100% 50%;">14%</div>
<div class="t i" style="left:1806.00px;top:817px;width:110px;text-align:right;font-size:14.3px;transform:scaleX(0.915);transform-origin:100% 50%;">14%</div>
<div class="t " style="left:129.50px;top:859px;width:420px;text-align:left;letter-spacing:0.380px;">Depreciation</div>
<svg style="left:571px;top:863px" width="14" height="13" viewBox="0 0 14 13"><path d="M2.2 7.2 L5.5 10.3 L11.8 2.3" fill="none" stroke="#3f7f68" stroke-width="3.3" stroke-linecap="butt" stroke-linejoin="miter"/><path d="M2.4 7.3 L5.5 10.0 L11.6 2.5" fill="none" stroke="#62a48b" stroke-width="2.0" stroke-linecap="butt" stroke-linejoin="miter"/></svg>
<div class="t " style="left:607.80px;top:859px;width:54px;text-align:center;transform:scaleX(0.91);transform-origin:50% 50%;">USD</div>
<div class="t " style="left:674.60px;top:859px;width:110px;text-align:right;font-size:14.3px;">(79,500)</div>
<div class="t " style="left:800.60px;top:859px;width:110px;text-align:right;font-size:14.3px;">(11,925)</div>
<div class="t " style="left:912.60px;top:859px;width:110px;text-align:right;font-size:14.3px;">(15,900)</div>
<div class="t " style="left:1024.60px;top:859px;width:110px;text-align:right;font-size:14.3px;">(15,900)</div>
<div class="t " style="left:1136.60px;top:859px;width:110px;text-align:right;font-size:14.3px;">(15,900)</div>
<div class="t " style="left:1248.60px;top:859px;width:110px;text-align:right;font-size:14.3px;">(15,900)</div>
<div class="t " style="left:1360.60px;top:859px;width:110px;text-align:right;font-size:14.3px;">(3,975)</div>
<div class="t " style="left:1565.00px;top:859px;width:20px;text-align:center;">-</div>
<div class="t " style="left:1677.00px;top:859px;width:20px;text-align:center;">-</div>
<div class="t " style="left:1789.00px;top:859px;width:20px;text-align:center;">-</div>
<div class="t b" style="left:118.10px;top:880px;width:420px;text-align:left;transform:scaleX(0.885);transform-origin:0 50%;">EBIT</div>
<svg style="left:571px;top:884px" width="14" height="13" viewBox="0 0 14 13"><path d="M2.2 7.2 L5.5 10.3 L11.8 2.3" fill="none" stroke="#3f7f68" stroke-width="3.3" stroke-linecap="butt" stroke-linejoin="miter"/><path d="M2.4 7.3 L5.5 10.0 L11.6 2.5" fill="none" stroke="#62a48b" stroke-width="2.0" stroke-linecap="butt" stroke-linejoin="miter"/></svg>
<div class="t b" style="left:607.80px;top:880px;width:54px;text-align:center;transform:scaleX(0.91);transform-origin:50% 50%;">USD</div>
<div class="t b" style="left:669.70px;top:880px;width:110px;text-align:right;font-size:14.3px;">247,536</div>
<div class="t b" style="left:795.70px;top:880px;width:110px;text-align:right;font-size:14.3px;">9,570</div>
<div class="t b" style="left:907.70px;top:880px;width:110px;text-align:right;font-size:14.3px;">14,533</div>
<div class="t b" style="left:1019.70px;top:880px;width:110px;text-align:right;font-size:14.3px;">16,117</div>
<div class="t b" style="left:1131.70px;top:880px;width:110px;text-align:right;font-size:14.3px;">16,757</div>
<div class="t b" style="left:1243.70px;top:880px;width:110px;text-align:right;font-size:14.3px;">17,410</div>
<div class="t b" style="left:1355.70px;top:880px;width:110px;text-align:right;font-size:14.3px;">30,002</div>
<div class="t b" style="left:1467.70px;top:880px;width:110px;text-align:right;font-size:14.3px;">34,656</div>
<div class="t b" style="left:1579.70px;top:880px;width:110px;text-align:right;font-size:14.3px;">35,349</div>
<div class="t b" style="left:1691.70px;top:880px;width:110px;text-align:right;font-size:14.3px;">36,056</div>
<div class="t b" style="left:1803.70px;top:880px;width:110px;text-align:right;font-size:14.3px;">37,024</div>
</div>
<div style="left:74px;top:906px;width:1821px;height:1px;background:#a2a2a2;"></div>
<div style="left:1894px;top:72px;width:1px;height:835px;background:#b0b0b0;"></div>
<div style="left:45px;top:51px;width:1850px;height:20px;background:#e6e6e6;"></div>
<div style="left:45px;top:71px;width:1850px;height:1px;background:#9e9e9e;"></div>
<div id="colhdr" style="left:0;top:0;width:1894px;height:72px;overflow:hidden;">
<div style="left:74px;top:51px;width:30px;height:20px;background:#d3d3d3;"></div>
<div style="left:103px;top:51px;width:1px;height:20px;background:#b8b8b8;"></div>
<div class="t hd sel" style="left:68.80px;top:53px;width:40px;text-align:center;font-size:13.6px;">A</div>
<div style="left:369px;top:51px;width:1px;height:20px;background:#b8b8b8;"></div>
<div class="t hd" style="left:216.80px;top:53px;width:40px;text-align:center;font-size:13.6px;">B</div>
<div style="left:459px;top:51px;width:1px;height:20px;background:#b8b8b8;"></div>
<div class="t hd" style="left:394.80px;top:53px;width:40px;text-align:center;font-size:13.6px;">C</div>
<div style="left:549px;top:51px;width:1px;height:20px;background:#b8b8b8;"></div>
<div class="t hd" style="left:484.80px;top:53px;width:40px;text-align:center;font-size:13.6px;">D</div>
<div style="left:607px;top:51px;width:1px;height:20px;background:#b8b8b8;"></div>
<div class="t hd" style="left:558.80px;top:53px;width:40px;text-align:center;font-size:13.6px;">E</div>
<div style="left:661px;top:51px;width:1px;height:20px;background:#b8b8b8;"></div>
<div class="t hd" style="left:614.80px;top:53px;width:40px;text-align:center;font-size:13.6px;">F</div>
<div style="left:675px;top:51px;width:1px;height:20px;background:#b8b8b8;"></div>
<div class="t hd" style="left:648.80px;top:53px;width:40px;text-align:center;font-size:13.6px;">G</div>
<div style="left:787px;top:51px;width:1px;height:20px;background:#b8b8b8;"></div>
<div class="t hd" style="left:711.80px;top:53px;width:40px;text-align:center;font-size:13.6px;">H</div>
<div style="left:801px;top:51px;width:1px;height:20px;background:#b8b8b8;"></div>
<div class="t hd" style="left:774.80px;top:53px;width:40px;text-align:center;font-size:13.6px;">I</div>
<div style="left:913px;top:51px;width:1px;height:20px;background:#b8b8b8;"></div>
<div class="t hd" style="left:837.80px;top:53px;width:40px;text-align:center;font-size:13.6px;">J</div>
<div style="left:1025px;top:51px;width:1px;height:20px;background:#b8b8b8;"></div>
<div class="t hd" style="left:949.80px;top:53px;width:40px;text-align:center;font-size:13.6px;">K</div>
<div style="left:1137px;top:51px;width:1px;height:20px;background:#b8b8b8;"></div>
<div class="t hd" style="left:1061.80px;top:53px;width:40px;text-align:center;font-size:13.6px;">L</div>
<div style="left:1249px;top:51px;width:1px;height:20px;background:#b8b8b8;"></div>
<div class="t hd" style="left:1173.80px;top:53px;width:40px;text-align:center;font-size:13.6px;">M</div>
<div style="left:1361px;top:51px;width:1px;height:20px;background:#b8b8b8;"></div>
<div class="t hd" style="left:1285.80px;top:53px;width:40px;text-align:center;font-size:13.6px;">N</div>
<div style="left:1473px;top:51px;width:1px;height:20px;background:#b8b8b8;"></div>
<div class="t hd" style="left:1397.80px;top:53px;width:40px;text-align:center;font-size:13.6px;">O</div>
<div style="left:1585px;top:51px;width:1px;height:20px;background:#b8b8b8;"></div>
<div class="t hd" style="left:1509.80px;top:53px;width:40px;text-align:center;font-size:13.6px;">P</div>
<div style="left:1697px;top:51px;width:1px;height:20px;background:#b8b8b8;"></div>
<div class="t hd" style="left:1621.80px;top:53px;width:40px;text-align:center;font-size:13.6px;">Q</div>
<div style="left:1809px;top:51px;width:1px;height:20px;background:#b8b8b8;"></div>
<div class="t hd" style="left:1733.80px;top:53px;width:40px;text-align:center;font-size:13.6px;">R</div>
<div style="left:1921px;top:51px;width:1px;height:20px;background:#b8b8b8;"></div>
<div class="t hd" style="left:1845.80px;top:53px;width:40px;text-align:center;font-size:13.6px;">S</div>
</div>
<div style="left:801px;top:6px;width:1px;height:66px;background:#9f9f9f;"></div>
<svg style="left:57px;top:55px" width="14" height="13" viewBox="0 0 14 13"><path d="M13 0.5 L13 12.5 L0.8 12.5 Z" fill="#b7b7b7"/></svg>
<div style="left:45px;top:72px;width:28px;height:834px;background:#e6e6e6;"></div>
<div style="left:45px;top:72px;width:28px;height:21px;background:#d3d3d3;"></div>
<div style="left:45px;top:92px;width:28px;height:1px;background:linear-gradient(90deg,#dcdcdc,#b4b4b4 60%,#a4a4a4);"></div>
<div class="t hd sel" style="left:45.20px;top:74px;width:28px;text-align:center;font-size:13.6px;">1</div>
<div style="left:45px;top:116px;width:28px;height:1px;background:linear-gradient(90deg,#dcdcdc,#b4b4b4 60%,#a4a4a4);"></div>
<div class="t hd" style="left:45.20px;top:97px;width:28px;text-align:center;font-size:13.6px;">2</div>
<div style="left:45px;top:138px;width:28px;height:1px;background:linear-gradient(90deg,#dcdcdc,#b4b4b4 60%,#a4a4a4);"></div>
<div class="t hd" style="left:45.20px;top:119px;width:28px;text-align:center;font-size:13.6px;">3</div>
<div style="left:45px;top:159px;width:28px;height:1px;background:linear-gradient(90deg,#dcdcdc,#b4b4b4 60%,#a4a4a4);"></div>
<div class="t hd" style="left:45.20px;top:141px;width:28px;text-align:center;font-size:13.6px;">4</div>
<div style="left:45px;top:180px;width:28px;height:1px;background:linear-gradient(90deg,#dcdcdc,#b4b4b4 60%,#a4a4a4);"></div>
<div class="t hd" style="left:45.20px;top:162px;width:28px;text-align:center;font-size:13.6px;">5</div>
<div style="left:45px;top:201px;width:28px;height:1px;background:linear-gradient(90deg,#dcdcdc,#b4b4b4 60%,#a4a4a4);"></div>
<div class="t hd" style="left:45.20px;top:183px;width:28px;text-align:center;font-size:13.6px;">6</div>
<div style="left:45px;top:222px;width:28px;height:1px;background:linear-gradient(90deg,#dcdcdc,#b4b4b4 60%,#a4a4a4);"></div>
<div class="t hd" style="left:45.20px;top:204px;width:28px;text-align:center;font-size:13.6px;">7</div>
<div style="left:45px;top:244px;width:28px;height:1px;background:linear-gradient(90deg,#dcdcdc,#b4b4b4 60%,#a4a4a4);"></div>
<div class="t hd" style="left:45.20px;top:225px;width:28px;text-align:center;font-size:13.6px;">8</div>
<div style="left:45px;top:265px;width:28px;height:1px;background:linear-gradient(90deg,#dcdcdc,#b4b4b4 60%,#a4a4a4);"></div>
<div class="t hd" style="left:45.20px;top:247px;width:28px;text-align:center;font-size:13.6px;">9</div>
<div style="left:45px;top:288px;width:28px;height:1px;background:linear-gradient(90deg,#dcdcdc,#b4b4b4 60%,#a4a4a4);"></div>
<div class="t hd" style="left:45.20px;top:268px;width:28px;text-align:center;font-size:13.6px;">10</div>
<div style="left:45px;top:310px;width:28px;height:1px;background:linear-gradient(90deg,#dcdcdc,#b4b4b4 60%,#a4a4a4);"></div>
<div class="t hd" style="left:45.20px;top:291px;width:28px;text-align:center;font-size:13.6px;">11</div>
<div style="left:45px;top:332px;width:28px;height:1px;background:linear-gradient(90deg,#dcdcdc,#b4b4b4 60%,#a4a4a4);"></div>
<div class="t hd" style="left:45.20px;top:313px;width:28px;text-align:center;font-size:13.6px;">12</div>
<div style="left:45px;top:353px;width:28px;height:1px;background:linear-gradient(90deg,#dcdcdc,#b4b4b4 60%,#a4a4a4);"></div>
<div class="t hd" style="left:45.20px;top:335px;width:28px;text-align:center;font-size:13.6px;">13</div>
<div style="left:45px;top:374px;width:28px;height:1px;background:linear-gradient(90deg,#dcdcdc,#b4b4b4 60%,#a4a4a4);"></div>
<div class="t hd" style="left:45.20px;top:356px;width:28px;text-align:center;font-size:13.6px;">14</div>
<div style="left:45px;top:395px;width:28px;height:1px;background:linear-gradient(90deg,#dcdcdc,#b4b4b4 60%,#a4a4a4);"></div>
<div class="t hd" style="left:45.20px;top:377px;width:28px;text-align:center;font-size:13.6px;">15</div>
<div style="left:45px;top:416px;width:28px;height:1px;background:linear-gradient(90deg,#dcdcdc,#b4b4b4 60%,#a4a4a4);"></div>
<div class="t hd" style="left:45.20px;top:398px;width:28px;text-align:center;font-size:13.6px;">16</div>
<div style="left:45px;top:437px;width:28px;height:1px;background:linear-gradient(90deg,#dcdcdc,#b4b4b4 60%,#a4a4a4);"></div>
<div class="t hd" style="left:45.20px;top:419px;width:28px;text-align:center;font-size:13.6px;">17</div>
<div style="left:45px;top:458px;width:28px;height:1px;background:linear-gradient(90deg,#dcdcdc,#b4b4b4 60%,#a4a4a4);"></div>
<div class="t hd" style="left:45.20px;top:440px;width:28px;text-align:center;font-size:13.6px;">18</div>
<div style="left:45px;top:479px;width:28px;height:1px;background:linear-gradient(90deg,#dcdcdc,#b4b4b4 60%,#a4a4a4);"></div>
<div class="t hd" style="left:45.20px;top:461px;width:28px;text-align:center;font-size:13.6px;">19</div>
<div style="left:45px;top:500px;width:28px;height:1px;background:linear-gradient(90deg,#dcdcdc,#b4b4b4 60%,#a4a4a4);"></div>
<div class="t hd" style="left:45.20px;top:482px;width:28px;text-align:center;font-size:13.6px;">20</div>
<div style="left:45px;top:521px;width:28px;height:1px;background:linear-gradient(90deg,#dcdcdc,#b4b4b4 60%,#a4a4a4);"></div>
<div class="t hd" style="left:45.20px;top:503px;width:28px;text-align:center;font-size:13.6px;">21</div>
<div style="left:45px;top:542px;width:28px;height:1px;background:linear-gradient(90deg,#dcdcdc,#b4b4b4 60%,#a4a4a4);"></div>
<div class="t hd" style="left:45.20px;top:524px;width:28px;text-align:center;font-size:13.6px;">22</div>
<div style="left:45px;top:563px;width:28px;height:1px;background:linear-gradient(90deg,#dcdcdc,#b4b4b4 60%,#a4a4a4);"></div>
<div class="t hd" style="left:45.20px;top:545px;width:28px;text-align:center;font-size:13.6px;">23</div>
<div style="left:45px;top:584px;width:28px;height:1px;background:linear-gradient(90deg,#dcdcdc,#b4b4b4 60%,#a4a4a4);"></div>
<div class="t hd" style="left:45.20px;top:566px;width:28px;text-align:center;font-size:13.6px;">24</div>
<div style="left:45px;top:605px;width:28px;height:1px;background:linear-gradient(90deg,#dcdcdc,#b4b4b4 60%,#a4a4a4);"></div>
<div class="t hd" style="left:45.20px;top:587px;width:28px;text-align:center;font-size:13.6px;">25</div>
<div style="left:45px;top:626px;width:28px;height:1px;background:linear-gradient(90deg,#dcdcdc,#b4b4b4 60%,#a4a4a4);"></div>
<div class="t hd" style="left:45.20px;top:608px;width:28px;text-align:center;font-size:13.6px;">26</div>
<div style="left:45px;top:647px;width:28px;height:1px;background:linear-gradient(90deg,#dcdcdc,#b4b4b4 60%,#a4a4a4);"></div>
<div class="t hd" style="left:45.20px;top:629px;width:28px;text-align:center;font-size:13.6px;">27</div>
<div style="left:45px;top:668px;width:28px;height:1px;background:linear-gradient(90deg,#dcdcdc,#b4b4b4 60%,#a4a4a4);"></div>
<div class="t hd" style="left:45.20px;top:650px;width:28px;text-align:center;font-size:13.6px;">28</div>
<div style="left:45px;top:689px;width:28px;height:1px;background:linear-gradient(90deg,#dcdcdc,#b4b4b4 60%,#a4a4a4);"></div>
<div class="t hd" style="left:45.20px;top:671px;width:28px;text-align:center;font-size:13.6px;">29</div>
<div style="left:45px;top:710px;width:28px;height:1px;background:linear-gradient(90deg,#dcdcdc,#b4b4b4 60%,#a4a4a4);"></div>
<div class="t hd" style="left:45.20px;top:692px;width:28px;text-align:center;font-size:13.6px;">30</div>
<div style="left:45px;top:731px;width:28px;height:1px;background:linear-gradient(90deg,#dcdcdc,#b4b4b4 60%,#a4a4a4);"></div>
<div class="t hd" style="left:45.20px;top:713px;width:28px;text-align:center;font-size:13.6px;">31</div>
<div style="left:45px;top:752px;width:28px;height:1px;background:linear-gradient(90deg,#dcdcdc,#b4b4b4 60%,#a4a4a4);"></div>
<div class="t hd" style="left:45.20px;top:734px;width:28px;text-align:center;font-size:13.6px;">32</div>
<div style="left:45px;top:773px;width:28px;height:1px;background:linear-gradient(90deg,#dcdcdc,#b4b4b4 60%,#a4a4a4);"></div>
<div class="t hd" style="left:45.20px;top:755px;width:28px;text-align:center;font-size:13.6px;">33</div>
<div style="left:45px;top:794px;width:28px;height:1px;background:linear-gradient(90deg,#dcdcdc,#b4b4b4 60%,#a4a4a4);"></div>
<div class="t hd" style="left:45.20px;top:776px;width:28px;text-align:center;font-size:13.6px;">34</div>
<div style="left:45px;top:815px;width:28px;height:1px;background:linear-gradient(90deg,#dcdcdc,#b4b4b4 60%,#a4a4a4);"></div>
<div class="t hd" style="left:45.20px;top:797px;width:28px;text-align:center;font-size:13.6px;">35</div>
<div style="left:45px;top:836px;width:28px;height:1px;background:linear-gradient(90deg,#dcdcdc,#b4b4b4 60%,#a4a4a4);"></div>
<div class="t hd" style="left:45.20px;top:818px;width:28px;text-align:center;font-size:13.6px;">36</div>
<div style="left:45px;top:857px;width:28px;height:1px;background:linear-gradient(90deg,#dcdcdc,#b4b4b4 60%,#a4a4a4);"></div>
<div class="t hd" style="left:45.20px;top:839px;width:28px;text-align:center;font-size:13.6px;">37</div>
<div style="left:45px;top:878px;width:28px;height:1px;background:linear-gradient(90deg,#dcdcdc,#b4b4b4 60%,#a4a4a4);"></div>
<div class="t hd" style="left:45.20px;top:860px;width:28px;text-align:center;font-size:13.6px;">38</div>
<div style="left:45px;top:899px;width:28px;height:1px;background:linear-gradient(90deg,#dcdcdc,#b4b4b4 60%,#a4a4a4);"></div>
<div class="t hd" style="left:45.20px;top:881px;width:28px;text-align:center;font-size:13.6px;">39</div>
<div style="left:45px;top:332px;width:28px;height:1px;background:#9f9f9f;"></div>
<div style="left:73px;top:51px;width:1px;height:855px;background:#9e9e9e;"></div>
<div style="left:72px;top:71px;width:33px;height:2px;background:#217346;"></div>
<div style="left:72px;top:92px;width:30px;height:2px;background:#217346;"></div>
<div style="left:72px;top:71px;width:2px;height:23px;background:#217346;"></div>
<div style="left:103px;top:71px;width:2px;height:19px;background:#217346;"></div>
<div style="left:100px;top:89px;width:7px;height:7px;background:#fff;"></div>
<div style="left:101px;top:90px;width:5px;height:5px;background:#217346;"></div>
<div class="lb" style="left:2px;top:51px;">1</div>
<div class="lb" style="left:22px;top:51px;">2</div>
<div class="lb" style="left:49px;top:8px;">1</div>
<div class="lb" style="left:49px;top:28px;">2</div>
<div style="left:9px;top:353px;width:2px;height:105px;background:#a0a0a0;"></div>
<div style="left:9px;top:456px;width:6px;height:2px;background:#a0a0a0;"></div>
<div style="left:9px;top:479px;width:2px;height:427px;background:#a0a0a0;"></div>
<div class="lb" style="left:2px;top:333px;"><i style="position:absolute;left:5px;top:8.5px;width:9px;height:2px;background:#5a5a5a"></i></div>
<div class="lb" style="left:2px;top:459px;"><i style="position:absolute;left:5px;top:8.5px;width:9px;height:2px;background:#5a5a5a"></i></div>
<div style="left:29px;top:363px;width:2px;height:2px;background:#8c8c8c;"></div>
<div style="left:29px;top:384px;width:2px;height:2px;background:#8c8c8c;"></div>
<div style="left:29px;top:405px;width:2px;height:2px;background:#8c8c8c;"></div>
<div style="left:29px;top:426px;width:2px;height:2px;background:#8c8c8c;"></div>
<div style="left:29px;top:447px;width:2px;height:2px;background:#8c8c8c;"></div>
<div style="left:29px;top:489px;width:2px;height:2px;background:#8c8c8c;"></div>
<div style="left:29px;top:510px;width:2px;height:2px;background:#8c8c8c;"></div>
<div style="left:29px;top:531px;width:2px;height:2px;background:#8c8c8c;"></div>
<div style="left:29px;top:552px;width:2px;height:2px;background:#8c8c8c;"></div>
<div style="left:29px;top:573px;width:2px;height:2px;background:#8c8c8c;"></div>
<div style="left:29px;top:594px;width:2px;height:2px;background:#8c8c8c;"></div>
<div style="left:29px;top:615px;width:2px;height:2px;background:#8c8c8c;"></div>
<div style="left:29px;top:636px;width:2px;height:2px;background:#8c8c8c;"></div>
<div style="left:29px;top:657px;width:2px;height:2px;background:#8c8c8c;"></div>
<div style="left:29px;top:678px;width:2px;height:2px;background:#8c8c8c;"></div>
<div style="left:29px;top:699px;width:2px;height:2px;background:#8c8c8c;"></div>
<div style="left:29px;top:720px;width:2px;height:2px;background:#8c8c8c;"></div>
<div style="left:29px;top:741px;width:2px;height:2px;background:#8c8c8c;"></div>
<div style="left:29px;top:762px;width:2px;height:2px;background:#8c8c8c;"></div>
<div style="left:29px;top:783px;width:2px;height:2px;background:#8c8c8c;"></div>
<div style="left:29px;top:804px;width:2px;height:2px;background:#8c8c8c;"></div>
<div style="left:29px;top:825px;width:2px;height:2px;background:#8c8c8c;"></div>
<div style="left:29px;top:846px;width:2px;height:2px;background:#8c8c8c;"></div>
<div style="left:29px;top:867px;width:2px;height:2px;background:#8c8c8c;"></div>
<div style="left:29px;top:888px;width:2px;height:2px;background:#8c8c8c;"></div>
<div style="left:741px;top:15px;width:1154px;height:2px;background:#9b9b9b;"></div>
<div class="lb" style="left:721px;top:8px;"><i style="position:absolute;left:5px;top:8.5px;width:9px;height:2px;background:#5a5a5a"></i></div>
<div style="left:794px;top:35px;width:2px;height:2px;background:#8c8c8c;"></div>
<div style="left:857px;top:35px;width:2px;height:2px;background:#8c8c8c;"></div>
<div style="left:969px;top:35px;width:2px;height:2px;background:#8c8c8c;"></div>
<div style="left:1081px;top:35px;width:2px;height:2px;background:#8c8c8c;"></div>
<div style="left:1193px;top:35px;width:2px;height:2px;background:#8c8c8c;"></div>
<div style="left:1305px;top:35px;width:2px;height:2px;background:#8c8c8c;"></div>
<div style="left:1417px;top:35px;width:2px;height:2px;background:#8c8c8c;"></div>
<div style="left:1529px;top:35px;width:2px;height:2px;background:#8c8c8c;"></div>
<div style="left:1641px;top:35px;width:2px;height:2px;background:#8c8c8c;"></div>
<div style="left:1753px;top:35px;width:2px;height:2px;background:#8c8c8c;"></div>
<div style="left:1865px;top:35px;width:2px;height:2px;background:#8c8c8c;"></div>
<div style="left:1895px;top:0px;width:26px;height:907px;background:#e6e6e6;"></div>
<div style="left:1898px;top:27px;width:19px;height:861px;background:#f1f1f1;"></div>
<div style="left:1898px;top:8px;width:19px;height:19px;background:#fff;box-sizing:border-box;border:1px solid #ababab;"></div>
<svg style="left:1903px;top:13px" width="10" height="6" viewBox="0 0 10 6"><path d="M0 5.5 L9.4 5.5 L4.7 0.3 Z" fill="#1a1a1a"/></svg>
<div style="left:1898px;top:27px;width:19px;height:177px;background:#fff;box-sizing:border-box;border:1px solid #ababab;"></div>
<div style="left:1899px;top:888px;width:18px;height:18px;background:#fff;box-sizing:border-box;border:1px solid #ababab;"></div>
<svg style="left:1903px;top:894px" width="10" height="6" viewBox="0 0 10 6"><path d="M0 0.5 L9.4 0.5 L4.7 5.7 Z" fill="#1a1a1a"/></svg>
<div style="left:0px;top:907px;width:1921px;height:31px;background:#e6e6e6;"></div>
<div style="left:0px;top:906px;width:74px;height:1px;background:#a2a2a2;"></div>
<div style="left:1250px;top:912px;width:644px;height:21px;background:#f0f0f0;"></div>
<div style="left:1170px;top:913px;width:19px;height:19px;background:#fff;box-sizing:border-box;border:1px solid #ababab;"></div>
<svg style="left:1176px;top:917px" width="6" height="10" viewBox="0 0 6 10"><path d="M5.5 0.3 L5.5 9.7 L0.4 5 Z" fill="#1a1a1a"/></svg>
<div style="left:1188px;top:913px;width:63px;height:19px;background:#fff;box-sizing:border-box;border:1px solid #ababab;"></div>
<div style="left:1874px;top:913px;width:19px;height:19px;background:#fff;box-sizing:border-box;border:1px solid #ababab;"></div>
<svg style="left:1881px;top:917px" width="6" height="10" viewBox="0 0 6 10"><path d="M0.5 0.3 L0.5 9.7 L5.6 5 Z" fill="#1a1a1a"/></svg>
<svg style="left:29px;top:917px" width="7" height="11" viewBox="0 0 7 11"><path d="M6.5 0.6 L6.5 10 L0.6 5.3 Z" fill="#0e6b37"/></svg>
<svg style="left:61px;top:917px" width="7" height="11" viewBox="0 0 7 11"><path d="M0.8 0.6 L0.8 10 L6.6 5.3 Z" fill="#0e6b37"/></svg>
<div style="left:90px;top:924.5px;width:2.2px;height:2.2px;background:#0e6b37;"></div>
<div style="left:95px;top:924.5px;width:2.2px;height:2.2px;background:#0e6b37;"></div>
<div style="left:100px;top:924.5px;width:2.2px;height:2.2px;background:#0e6b37;"></div>
<div style="left:112px;top:910px;width:1px;height:24px;background:#ababab;"></div>
<div style="left:213px;top:910px;width:1px;height:24px;background:#ababab;"></div>
<div style="left:287px;top:910px;width:1px;height:24px;background:#ababab;"></div>
<div style="left:372px;top:910px;width:1px;height:24px;background:#ababab;"></div>
<div style="left:466px;top:910px;width:1px;height:24px;background:#ababab;"></div>
<div style="left:573px;top:910px;width:1px;height:24px;background:#ababab;"></div>
<div style="left:661px;top:910px;width:1px;height:24px;background:#ababab;"></div>
<div style="left:740px;top:910px;width:1px;height:24px;background:#ababab;"></div>
<div style="left:792px;top:910px;width:1px;height:24px;background:#ababab;"></div>
<div style="left:856px;top:910px;width:1px;height:24px;background:#ababab;"></div>
<div style="left:931px;top:910px;width:1px;height:24px;background:#ababab;"></div>
<div class="t tab" style="left:92.26px;top:911px;width:140px;text-align:center;font-size:16.6px;letter-spacing:0.329px;">Summary</div>
<div class="t tab" style="left:180.40px;top:911px;width:140px;text-align:center;font-size:16.6px;letter-spacing:0.596px;">Inputs</div>
<div class="t tab" style="left:258.78px;top:911px;width:140px;text-align:center;font-size:16.6px;letter-spacing:-0.334px;">Capex_i</div>
<div class="t tab" style="left:348.83px;top:911px;width:140px;text-align:center;font-size:16.6px;letter-spacing:0.270px;">Products</div>
<div class="t tab" style="left:449.78px;top:911px;width:140px;text-align:center;font-size:16.6px;letter-spacing:0.064px;">Economics</div>
<div class="t tab" style="left:546.81px;top:911px;width:140px;text-align:center;font-size:16.6px;letter-spacing:-0.386px;">Capex_c</div>
<div class="t tab" style="left:631.04px;top:911px;width:140px;text-align:center;font-size:16.6px;letter-spacing:0.076px;">Payroll</div>
<div class="t tab" style="left:695.77px;top:911px;width:140px;text-align:center;font-size:16.6px;letter-spacing:0.044px;">WC</div>
<div class="t tab" style="left:754.30px;top:911px;width:140px;text-align:center;font-size:16.6px;letter-spacing:0.600px;">Debt</div>
<div class="t tab" style="left:823.52px;top:911px;width:140px;text-align:center;font-size:16.6px;letter-spacing:0.033px;">WACC</div>
<div class="t tab" style="left:898.55px;top:911px;width:140px;text-align:center;font-size:16.6px;letter-spacing:0.600px;">Model</div>
<div style="left:1006px;top:906px;width:44px;height:27px;background:#f3f3f3;"></div>
<div style="left:1006px;top:907px;width:1px;height:26px;background:#ababab;"></div>
<div style="left:1049px;top:907px;width:1px;height:26px;background:#ababab;"></div>
<div style="left:1006px;top:933px;width:44px;height:2px;background:#217346;"></div>
<div class="t tab b" style="left:1005.80px;top:911px;width:44px;text-align:center;font-size:16.6px;color:#217346;">FS</div>
<div class="t tab" style="left:1052.20px;top:911px;width:30px;text-align:center;font-size:16.6px;">R</div>
<div style="left:1082px;top:924.5px;width:2.2px;height:2.2px;background:#0e6b37;"></div>
<div style="left:1087px;top:924.5px;width:2.2px;height:2.2px;background:#0e6b37;"></div>
<div style="left:1092px;top:924.5px;width:2.2px;height:2.2px;background:#0e6b37;"></div>
<svg style="left:1109px;top:911.5px" width="22" height="22" viewBox="0 0 22 22"><circle cx="11" cy="11" r="9.3" fill="none" stroke="#777" stroke-width="1.1"/><path d="M6 11 L16 11 M11 6 L11 16" stroke="#666" stroke-width="1.3"/></svg>
<div style="left:1150px;top:916px;width:3px;height:3px;background:#b4b4b4;"></div>
<div style="left:1150px;top:921px;width:3px;height:3px;background:#b4b4b4;"></div>
<div style="left:1150px;top:927px;width:3px;height:3px;background:#b4b4b4;"></div>
<div style="left:0px;top:938px;width:1921px;height:28px;background:#f3f3f3;"></div>
<div style="left:0px;top:938px;width:1921px;height:1px;background:#c8c8c8;"></div>
<div class="t st" style="left:14.20px;top:943px;width:60px;text-align:left;font-size:12.3px;">Ready</div>
<div class="t st" style="left:71.30px;top:943px;width:80px;text-align:left;font-size:12.3px;">Calculate</div>
<div class="t st b" style="left:211.00px;top:943px;width:200px;text-align:left;font-size:12.3px;letter-spacing:0.2px;">Accessibility: Investigate</div>
<svg style="left:150px;top:943px" width="17" height="17" viewBox="0 0 17 17"><rect x="1.6" y="2.6" width="13.3" height="12.7" fill="#fff" stroke="#5c5c5c" stroke-width="1.1"/><rect x="8" y="2" width="7.4" height="3.7" fill="#5c5c5c"/><circle cx="3.6" cy="4.4" r="3.4" fill="#5c5c5c"/><path d="M7.3 7.6 h1.6 M10.4 7.6 h1.6 M4.2 10.6 h1.6 M7.3 10.6 h1.6 M10.4 10.6 h1.6 M4.2 13.5 h1.6 M7.3 13.5 h1.6 M10.4 13.5 h1.6" stroke="#5c5c5c" stroke-width="1"/></svg>
<svg style="left:188px;top:943px" width="21" height="20" viewBox="0 0 21 20"><path d="M7.0 2.9 A6.6 6.6 0 0 0 8.2 15.9" fill="none" stroke="#555" stroke-width="1.2" stroke-dasharray="3.1 1.2"/><path d="M8.5 1.2 V9.4 M12 7.4 H16.6" fill="none" stroke="#555" stroke-width="1"/><path d="M6.1 7.0 L8.5 9.9 L10.9 7.0 Z M14.9 5.1 L17.5 7.4 L14.9 9.7 Z" fill="#555"/><path d="M10.4 10.5 L19.8 18.6" stroke="#4a4a4a" stroke-width="1.9"/><path d="M19.4 10.8 L10.6 18.6" stroke="#4a4a4a" stroke-width="1.3"/></svg>
<div style="left:1554px;top:939px;width:50px;height:27px;background:#c6c6c6;"></div>
<svg style="left:1571px;top:944px" width="17" height="17" viewBox="0 0 17 17"><rect x="0.5" y="0.5" width="15" height="15" fill="none" stroke="#6a6a6a"/><path d="M5.5 0.5 V15.5 M10.5 0.5 V15.5 M0.5 5.5 H15.5 M0.5 10.5 H15.5" stroke="#6a6a6a"/></svg>
<svg style="left:1620px;top:944px" width="18" height="17" viewBox="0 0 18 17"><rect x="0.5" y="0.5" width="16" height="15" fill="none" stroke="#6a6a6a"/><rect x="4.5" y="3.5" width="8" height="9" fill="none" stroke="#6a6a6a"/><path d="M6 6.5 H11 M6 9.5 H11" stroke="#6a6a6a"/></svg>
<svg style="left:1670px;top:944px" width="18" height="17" viewBox="0 0 18 17"><rect x="0.5" y="0.5" width="16" height="15" fill="none" stroke="#6a6a6a"/><path d="M5.5 0.5 V7.5 H0.5 M9.5 0.5 V7.5 H5.5" fill="none" stroke="#6a6a6a"/></svg>
<div style="left:1711px;top:951.5px;width:10px;height:1px;background:#4a4a4a;"></div>
<div style="left:1727px;top:952px;width:125px;height:1px;background:#5e5e5e;"></div>
<div style="left:1774px;top:945px;width:6px;height:14px;background:#444;"></div>
<div style="left:1788.5px;top:949px;width:1px;height:7px;background:#4a4a4a;"></div>
<div style="left:1858px;top:951.5px;width:10px;height:1px;background:#4a4a4a;"></div>
<div style="left:1862.5px;top:947px;width:1px;height:10px;background:#4a4a4a;"></div>
<div class="t st" style="left:1884.00px;top:943px;width:40px;text-align:left;font-size:12.3px;">80%</div>
<div style="left:41px;top:965px;width:1576px;height:1px;background:#878787;"></div>
<div style="left:1617px;top:965px;width:302px;height:1px;background:#b2b2b2;"></div>
<div style="left:1919px;top:0px;width:1px;height:966px;background:#f4f4f4;"></div>
<div style="left:1920px;top:0px;width:1px;height:966px;background:#000;"></div>
</body></html>
